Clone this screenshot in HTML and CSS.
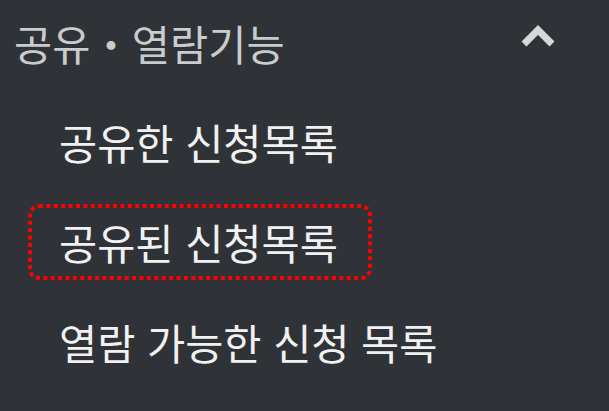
FILE: index.html
```html
<!DOCTYPE html>
<html lang="ko">

<head>
    <meta charset="UTF-8">
    <title>공유・열람기능</title>

    <link rel="stylesheet" href="styles.css">

</head>

<body>
    <nav class="menu">
        <div class="menu-head">
            <span class="menu-title">공유・열람기능</span>
            <svg class="chevron" viewBox="0 0 36 24" width="36" height="24">
                <polyline points="4,20 18,6 32,20" fill="none" stroke="#d6d7d8" stroke-width="7" stroke-linejoin="miter" />
            </svg>
        </div>

        <ul class="menu-list">
            <li class="menu-item"><span class="item-text">공유한 신청목록</span></li>
            <li class="menu-item">
                <span class="item-text marked">공유된 신청목록
                    <svg class="mark" viewBox="0 0 344 76" preserveAspectRatio="none">
                        <rect x="2" y="2" width="340" height="72" rx="9" fill="none" stroke="#ff0000" stroke-width="4" stroke-dasharray="4 3.4" />
                    </svg>
                </span>
            </li>
            <li class="menu-item"><span class="item-text">열람 가능한 신청 목록</span></li>
        </ul>
    </nav>
</body>

</html>
```

FILE: styles.css
```css
html,
body {
    margin: 0;
    height: 100%;
    background: #2f3338;
}

body {
    font-family: "Noto Sans CJK KR", "Noto Sans", sans-serif;
    overflow: hidden;
}

.menu {
    width: 609px;
}

.menu-head {
    display: flex;
    justify-content: space-between;
    align-items: center;
    height: 86px;
    padding: 0 53px 0 14px;
}

.menu-title {
    font-size: 41.5px;
    line-height: 84px;
    color: #c9cbcd;
}

.chevron {
    display: block;
    margin-bottom: 14px;
}

.menu-list {
    list-style: none;
    margin: 0;
    padding: 6px 0 0 59px;
}

.menu-item {
    height: 100px;
    display: flex;
    align-items: center;
}

.item-text {
    font-size: 41.5px;
    line-height: 76px;
    color: #f1f1f1;
}

.marked {
    position: relative;
    display: inline-block;
    height: 76px;
    width: 344px;
    margin-left: -31px;
    padding-left: 31px;
    box-sizing: border-box;
}

.mark {
    position: absolute;
    left: 0;
    top: 0;
    width: 100%;
    height: 100%;
}
```
